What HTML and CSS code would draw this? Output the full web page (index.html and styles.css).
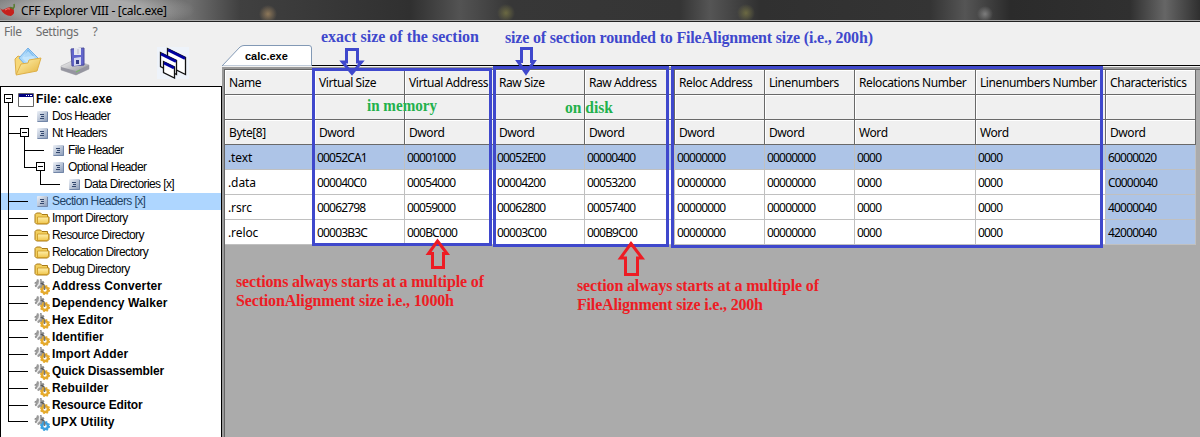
FILE: index.html
```
<!DOCTYPE html>
<html lang="en">
<head>
<meta charset="utf-8">
<title>CFF Explorer VIII - [calc.exe]</title>
<link rel="stylesheet" href="styles.css">
</head>
<body>
<svg class="defs" width="0" height="0" aria-hidden="true">
  <defs>
    <linearGradient id="gFold" x1="0" y1="0" x2="1" y2="1"><stop offset="0" stop-color="#fff6b8"/><stop offset="1" stop-color="#e5b23a"/></linearGradient>
    <linearGradient id="gPage" x1="0" y1="0" x2="1" y2="1"><stop offset="0" stop-color="#eef2f8"/><stop offset="1" stop-color="#8496b4"/></linearGradient>
    <linearGradient id="gDir" x1="0" y1="0" x2="0" y2="1"><stop offset="0" stop-color="#fff0ac"/><stop offset="1" stop-color="#f0c64e"/></linearGradient>
    <linearGradient id="gDrive" x1="0" y1="0" x2="1" y2="1"><stop offset="0" stop-color="#f4f4f4"/><stop offset="1" stop-color="#85858b"/></linearGradient>
    <symbol id="page" viewBox="0 0 16 16"><rect x="3" y="2" width="11" height="11" rx="1" fill="url(#gPage)"/><path d="M3.500 12.500h10V3" fill="none" stroke="#7286a8"/><path d="M6 5.500h4M7 7.500h3M6 9.500h4" stroke="#34486e"/></symbol>
    <symbol id="folder" viewBox="0 0 16 16"><path d="M1 11.500V3.500L2.500 2h4L8 3.500h5.500V6H15v5.500L13.500 13h-11z" fill="#f2cf5e" stroke="#a97a16"/><path d="M3.500 6H14.500v5L13 12.500H3.500z" fill="url(#gDir)" stroke="#c9951f" stroke-width=".8"/></symbol>
    <symbol id="gearpair" viewBox="0 0 16 16"><circle cx="5.500" cy="5" r="3" fill="#b4b4b4" stroke="#999" stroke-width="2"/><circle cx="5.500" cy="5" r="4.400" fill="none" stroke="#8a8a8a" stroke-width="1.300" stroke-dasharray="1.800 1.650"/><path d="M5.500 1v4L3 8" stroke="#ececec" stroke-width="1.300" fill="none"/><path d="M6.500 4.500h2l2 3V10" stroke="#5c5c5c" stroke-width="1.500" fill="none"/><circle cx="11" cy="11" r="3" fill="none" stroke="currentColor" stroke-width="2.600"/><circle cx="11" cy="11" r="4.400" fill="none" stroke="currentColor" stroke-width="1.300" stroke-dasharray="1.800 1.650"/><path d="M10.500 7v4" stroke="#777" stroke-width="1.500"/></symbol>
    <symbol id="win" viewBox="0 0 16 14"><path d="M.5.5h15v13H.5z" fill="#fff" stroke="#666"/><path d="M1 1h14v3H1z" fill="#000080"/><path d="M8 2.500h1M10 2.500h1M12 2.500h2" stroke="#fff"/></symbol>
  </defs>
</svg>
<div class="app">
  <header class="titlebar">
    <svg width="16" height="16" viewBox="0 0 16 16"><path d="M0 6Q2 9 5 7Q9 4 13 6Q16 11 11 14Q4 14 0 6z" fill="#c5211c"/><path d="M5 8Q8 6 10 7" stroke="#f48078" fill="none"/><path d="M12 7Q15 6 14 2M10 5.500l4 1" stroke="#557b2d" stroke-width="1.500" fill="none"/></svg>
    <span class="caption">CFF Explorer VIII - [calc.exe]</span>
  </header>
  <div class="main">
    <aside class="side">
      <nav class="menu"><span>File</span><span>Settings</span><span>?</span></nav>
      <div class="tools">
        <svg class="t-open" width="28" height="30" viewBox="0 0 28 30"><path d="M1 12l3-3 6 2v14l-8 2z" fill="#f7d878" stroke="#dbae49"/><path d="M14 1l10 10-9 11L5 11z" fill="#a9d7fa" stroke="#75b0e6"/><path d="M14 2l6 7-10 1z" fill="#54a4ea" opacity=".6"/><path d="M14 4l7 7-6 7-7-7z" fill="#d6efff" opacity=".6"/><path d="M2 28l5-11 7-1 1-3 12-2-4 13z" fill="url(#gFold)" stroke="#deb047"/></svg>
        <svg class="t-save" width="30" height="30" viewBox="0 0 30 30"><path d="M1 19l13-6 15 5v4l-13 6L1 23z" fill="url(#gDrive)" stroke="#b8b8bc" stroke-width=".7"/><path d="M1 20l15 4 13-6v4l-13 6-15-5z" fill="#9696a0"/><path d="M11 2l13-1v17l-12 1z" fill="#6266cc" stroke="#4a4b9b"/><path d="M14 1h7v7h-7z" fill="#e6e7ee"/><path d="M18 2v5" stroke="#b9bac8"/><path d="M14 11l7-1v8l-7 1z" fill="#d5d8ef"/><path d="M16 13h3v4h-3" fill="#333b87"/><path d="M16 25l4-2" stroke="#73c05c"/></svg>
        <svg class="t-wins" width="32" height="32" viewBox="0 0 32 32"><path d="M0 0h32v32H0z" fill="#eef3fa"/><g fill="#fff" stroke="#111" stroke-width="1.300"><path d="M10.500 1.500l18 9v17l-18-9z"/><path d="M3.500 5.500l16 8v14l-16-8z"/><path d="M6.500 14.500l11 5.500v11l-11-5.500z"/></g><g stroke="#0000a0" stroke-width="2.600"><path d="M11 3l17 8.500M4 7l15 7.500M7 16l10 5"/></g></svg>
      </div>
      <div class="tree">
        <svg class="lines" width="70" height="350" viewBox="0 0 70 350" fill="none" stroke="#000" shape-rendering="crispEdges">
          <path d="M7.500 16v318.500M7.500 29.500h19M7.500 46.500h16M7.500 114.500h19M7.500 131.500h19M7.500 148.500h19M7.500 165.500h19M7.500 182.500h19M7.500 199.500h19M7.500 216.500h19M7.500 233.500h19M7.500 250.500h19M7.500 267.500h19M7.500 284.500h19M7.500 301.500h19M7.500 318.500h19M7.500 334.500h19M23.500 46v34.500h16M23.500 63.500h19M39.500 80v17.500h19"/>
          <g fill="#fff"><path d="M3.500 7.500h8v8h-8zM19.500 41.500h8v8h-8zM35.500 75.500h8v8h-8z"/><path d="M5 11.500h5M21 45.500h5M37 79.500h5"/></g>
        </svg>
        <div class="row root"><svg width="16" height="14"><use href="#win"/></svg><b>File: calc.exe</b></div>
        <div class="row l1"><svg><use href="#page"/></svg><span>Dos Header</span></div>
        <div class="row l1"><svg><use href="#page"/></svg><span>Nt Headers</span></div>
        <div class="row l2"><svg><use href="#page"/></svg><span>File Header</span></div>
        <div class="row l2"><svg><use href="#page"/></svg><span>Optional Header</span></div>
        <div class="row l3"><svg><use href="#page"/></svg><span>Data Directories [x]</span></div>
        <div class="row l1 selected"><svg><use href="#page"/></svg><span>Section Headers [x]</span></div>
        <div class="row l1"><svg><use href="#folder"/></svg><span>Import Directory</span></div>
        <div class="row l1"><svg><use href="#folder"/></svg><span>Resource Directory</span></div>
        <div class="row l1"><svg><use href="#folder"/></svg><span>Relocation Directory</span></div>
        <div class="row l1"><svg><use href="#folder"/></svg><span>Debug Directory</span></div>
        <div class="row l1"><svg><use href="#gearpair"/></svg><b>Address Converter</b></div>
        <div class="row l1"><svg><use href="#gearpair"/></svg><b>Dependency Walker</b></div>
        <div class="row l1"><svg><use href="#gearpair"/></svg><b>Hex Editor</b></div>
        <div class="row l1"><svg><use href="#gearpair"/></svg><b>Identifier</b></div>
        <div class="row l1"><svg><use href="#gearpair"/></svg><b>Import Adder</b></div>
        <div class="row l1"><svg><use href="#gearpair"/></svg><b class="tight">Quick Disassembler</b></div>
        <div class="row l1"><svg><use href="#gearpair"/></svg><b>Rebuilder</b></div>
        <div class="row l1"><svg><use href="#gearpair"/></svg><b class="tight">Resource Editor</b></div>
        <div class="row l1"><svg class="blue"><use href="#gearpair"/></svg><b>UPX Utility</b></div>
      </div>
    </aside>
    <section class="content">
      <div class="tabs">
        <div class="tab"><svg width="90" height="21" viewBox="0 0 90 21"><path d="M0 21L18 2Q20 .5 22 .5H87Q89.500.5 89.500 3V21z" fill="#fff" stroke="#8299b5"/></svg><b>calc.exe</b></div>
        <div class="rule"></div>
      </div>
      <div class="panel">
        <div class="grid">
          <div class="h">Name</div><div class="h">Virtual Size</div><div class="h">Virtual Address</div><div class="h">Raw Size</div><div class="h">Raw Address</div><div class="h">Reloc Address</div><div class="h">Linenumbers</div><div class="h">Relocations Number</div><div class="h">Linenumbers Number</div><div class="h">Characteristics</div>
          <div class="h"></div><div class="h"></div><div class="h"></div><div class="h"></div><div class="h"></div><div class="h"></div><div class="h"></div><div class="h"></div><div class="h"></div><div class="h"></div>
          <div class="h">Byte[8]</div><div class="h">Dword</div><div class="h">Dword</div><div class="h">Dword</div><div class="h">Dword</div><div class="h">Dword</div><div class="h">Dword</div><div class="h">Word</div><div class="h">Word</div><div class="h">Dword</div>
          <div class="d n s">.text</div><div class="d s">00052CA1</div><div class="d s">00001000</div><div class="d s">00052E00</div><div class="d s">00000400</div><div class="d s">00000000</div><div class="d s">00000000</div><div class="d s">0000</div><div class="d s">0000</div><div class="d s">60000020</div>
          <div class="d n">.data</div><div class="d">000040C0</div><div class="d">00054000</div><div class="d">00004200</div><div class="d">00053200</div><div class="d">00000000</div><div class="d">00000000</div><div class="d">0000</div><div class="d">0000</div><div class="d s">C0000040</div>
          <div class="d n">.rsrc</div><div class="d">00062798</div><div class="d">00059000</div><div class="d">00062800</div><div class="d">00057400</div><div class="d">00000000</div><div class="d">00000000</div><div class="d">0000</div><div class="d">0000</div><div class="d s">40000040</div>
          <div class="d n">.reloc</div><div class="d">00003B3C</div><div class="d">000BC000</div><div class="d">00003C00</div><div class="d">000B9C00</div><div class="d">00000000</div><div class="d">00000000</div><div class="d">0000</div><div class="d">0000</div><div class="d s">42000040</div>
        </div>
      </div>
    </section>
  </div>
  <svg class="notes" width="1200" height="437" viewBox="0 0 1200 437">
    <g fill="none" stroke="#3f48cc" stroke-width="3">
      <path d="M313.500 69.500h177v175h-177zM494.500 67.500h173v178h-173zM672.500 67.500h429v179h-429z"/>
      <path d="M346.500 49.500h11v12.500h4L352 73.500 342.500 62h4zM521.500 48.500h10v13h2.500L526 73 518 61.500h3.500z"/>
    </g>
    <path d="M437.500 241L447 253.500h-3.500v14h-11v-14h-4zM631 243.500L642 258h-4.500v16.500h-12V258h-5z" fill="none" stroke="#ed1c24" stroke-width="3"/>
    <g class="blue-note"><text x="321" y="42" textLength="158">exact size of the section</text><text x="505" y="43" textLength="368">size of section rounded to FileAlignment size (i.e., 200h)</text></g>
    <g class="green-note"><text x="367" y="111" textLength="70" lengthAdjust="spacingAndGlyphs">in memory</text><text x="565" y="113" textLength="48" lengthAdjust="spacingAndGlyphs">on disk</text></g>
    <g class="red-note"><text x="236" y="287" textLength="248">sections always starts at a multiple of</text><text x="236" y="306" textLength="218">SectionAlignment size i.e., 1000h</text><text x="577" y="291" textLength="242">section always starts at a multiple of</text><text x="577" y="310" textLength="186">FileAlignment size i.e., 200h</text></g>
  </svg>
</div>
</body>
</html>
```
FILE: styles.css
```
* { box-sizing: border-box; }
body { margin: 0; overflow: hidden; font-family: "Noto Sans", "Open Sans", sans-serif; font-size: 12px; color: #000; }
svg { display: block; flex: none; }
.defs { position: absolute; }
.app { position: relative; width: 1200px; height: 437px; display: flex; flex-direction: column; background: #f0f0f0; }
.titlebar {
  height: 22px; flex: none; display: flex; align-items: center; gap: 5px; padding-bottom: 1px;
  border-bottom: 1px solid #222; box-shadow: inset 0 -1px #aaa;
  background:
    radial-gradient(ellipse 110px 22px at 85px 10px, #aaa 0 50%, transparent 100%),
    radial-gradient(circle at 268px 14px, rgba(169, 139, 98, .75), transparent 9px),
    radial-gradient(circle at 506px 13px, rgba(124, 121, 69, .75), transparent 9px),
    radial-gradient(circle at 746px 13px, rgba(124, 121, 69, .75), transparent 9px),
    radial-gradient(circle at 985px 14px, rgba(150, 150, 150, .7), transparent 8px),
    linear-gradient(90deg, #777 0, #707070 190px, #404040 240px, #303030 410px, #535353 460px, #373737 510px, #353535 680px, #555 710px, #303030 760px, #343434 930px, #555 965px, #2b2b2b 1010px, #303030 1130px, #666 1165px, #2f2f2f 1200px);
}
.caption { letter-spacing: -.31px; white-space: nowrap; }
.main { flex: 1; display: flex; min-height: 0; }
.side { width: 222px; display: flex; flex-direction: column; flex: none; }
.menu { height: 20px; display: flex; gap: 14px; padding-left: 4px; line-height: 20px; color: #6d6d6d; letter-spacing: -.37px; }
.tools { height: 44px; flex: none; display: flex; align-items: flex-start; padding: 5px 0 0 14px; }
.t-save { margin-left: 18px; }
.t-wins { margin-left: 67px; }
.tree { position: relative; flex: 1; border: 1px solid #000; border-bottom: 0; background: #fff; padding-top: 4px; font: 12px/17px "Liberation Sans", Arial, sans-serif; }
.lines { position: absolute; left: 0; top: 0; }
.row { height: 17px; display: flex; align-items: center; white-space: nowrap; letter-spacing: -.6px; }
.row svg { width: 16px; height: 16px; color: #e5aa2c; }
.row b { letter-spacing: .12px; }
.row b.tight { letter-spacing: -.15px; }
.row svg.blue { color: #3aa0df; }
.root { padding-left: 17px; gap: 2px; }
.root svg { height: 14px; }
.l1 { padding-left: 33px; gap: 2px; }
.l2 { padding-left: 49px; gap: 2px; }
.l3 { padding-left: 65px; gap: 2px; }
.selected { background: #aed6ff; color: #1f4264; }
.content { flex: 1; min-width: 0; display: flex; flex-direction: column; }
.tabs { height: 45px; flex: none; display: flex; align-items: flex-end; padding-bottom: 1px; }
.tab { position: relative; width: 90px; height: 21px; flex: none; }
.tab b { position: absolute; left: 23px; top: 4px; font: bold 11px/15px "Liberation Sans", Arial, sans-serif; }
.rule { flex: 1; height: 1px; background: #000; }
.panel { flex: 1; border: solid #999; border-width: 2px 0 0 2px; box-shadow: inset 1px 1px #666; background: #ababab; padding: 1px 0 0 1px; }
.grid { display: grid; width: 971px; grid-template-columns: repeat(7, 90px) 121px 130px 90px; grid-auto-rows: 25px; line-height: 23px; white-space: nowrap; }
.h { background: #f0f0f0; border: solid #696969; border-width: 0 1px 1px 0; box-shadow: inset 1px 1px #fff; padding: 1px 0 0 4px; letter-spacing: -.42px; }
.d { background: #fff; border: solid #c0c0c0; border-width: 0 1px 1px 0; padding: 1px 0 0 2px; letter-spacing: -.82px; }
.n { padding-left: 3px; letter-spacing: -.1px; }
.s { background: #adc4e7; }
.notes { position: absolute; left: 0; top: 0; font: bold 16px "Liberation Serif", "Times New Roman", serif; }
.blue-note { fill: #3f48cc; }
.green-note { fill: #22b14c; font-size: 17px; }
.red-note { fill: #ed1c24; }
```
